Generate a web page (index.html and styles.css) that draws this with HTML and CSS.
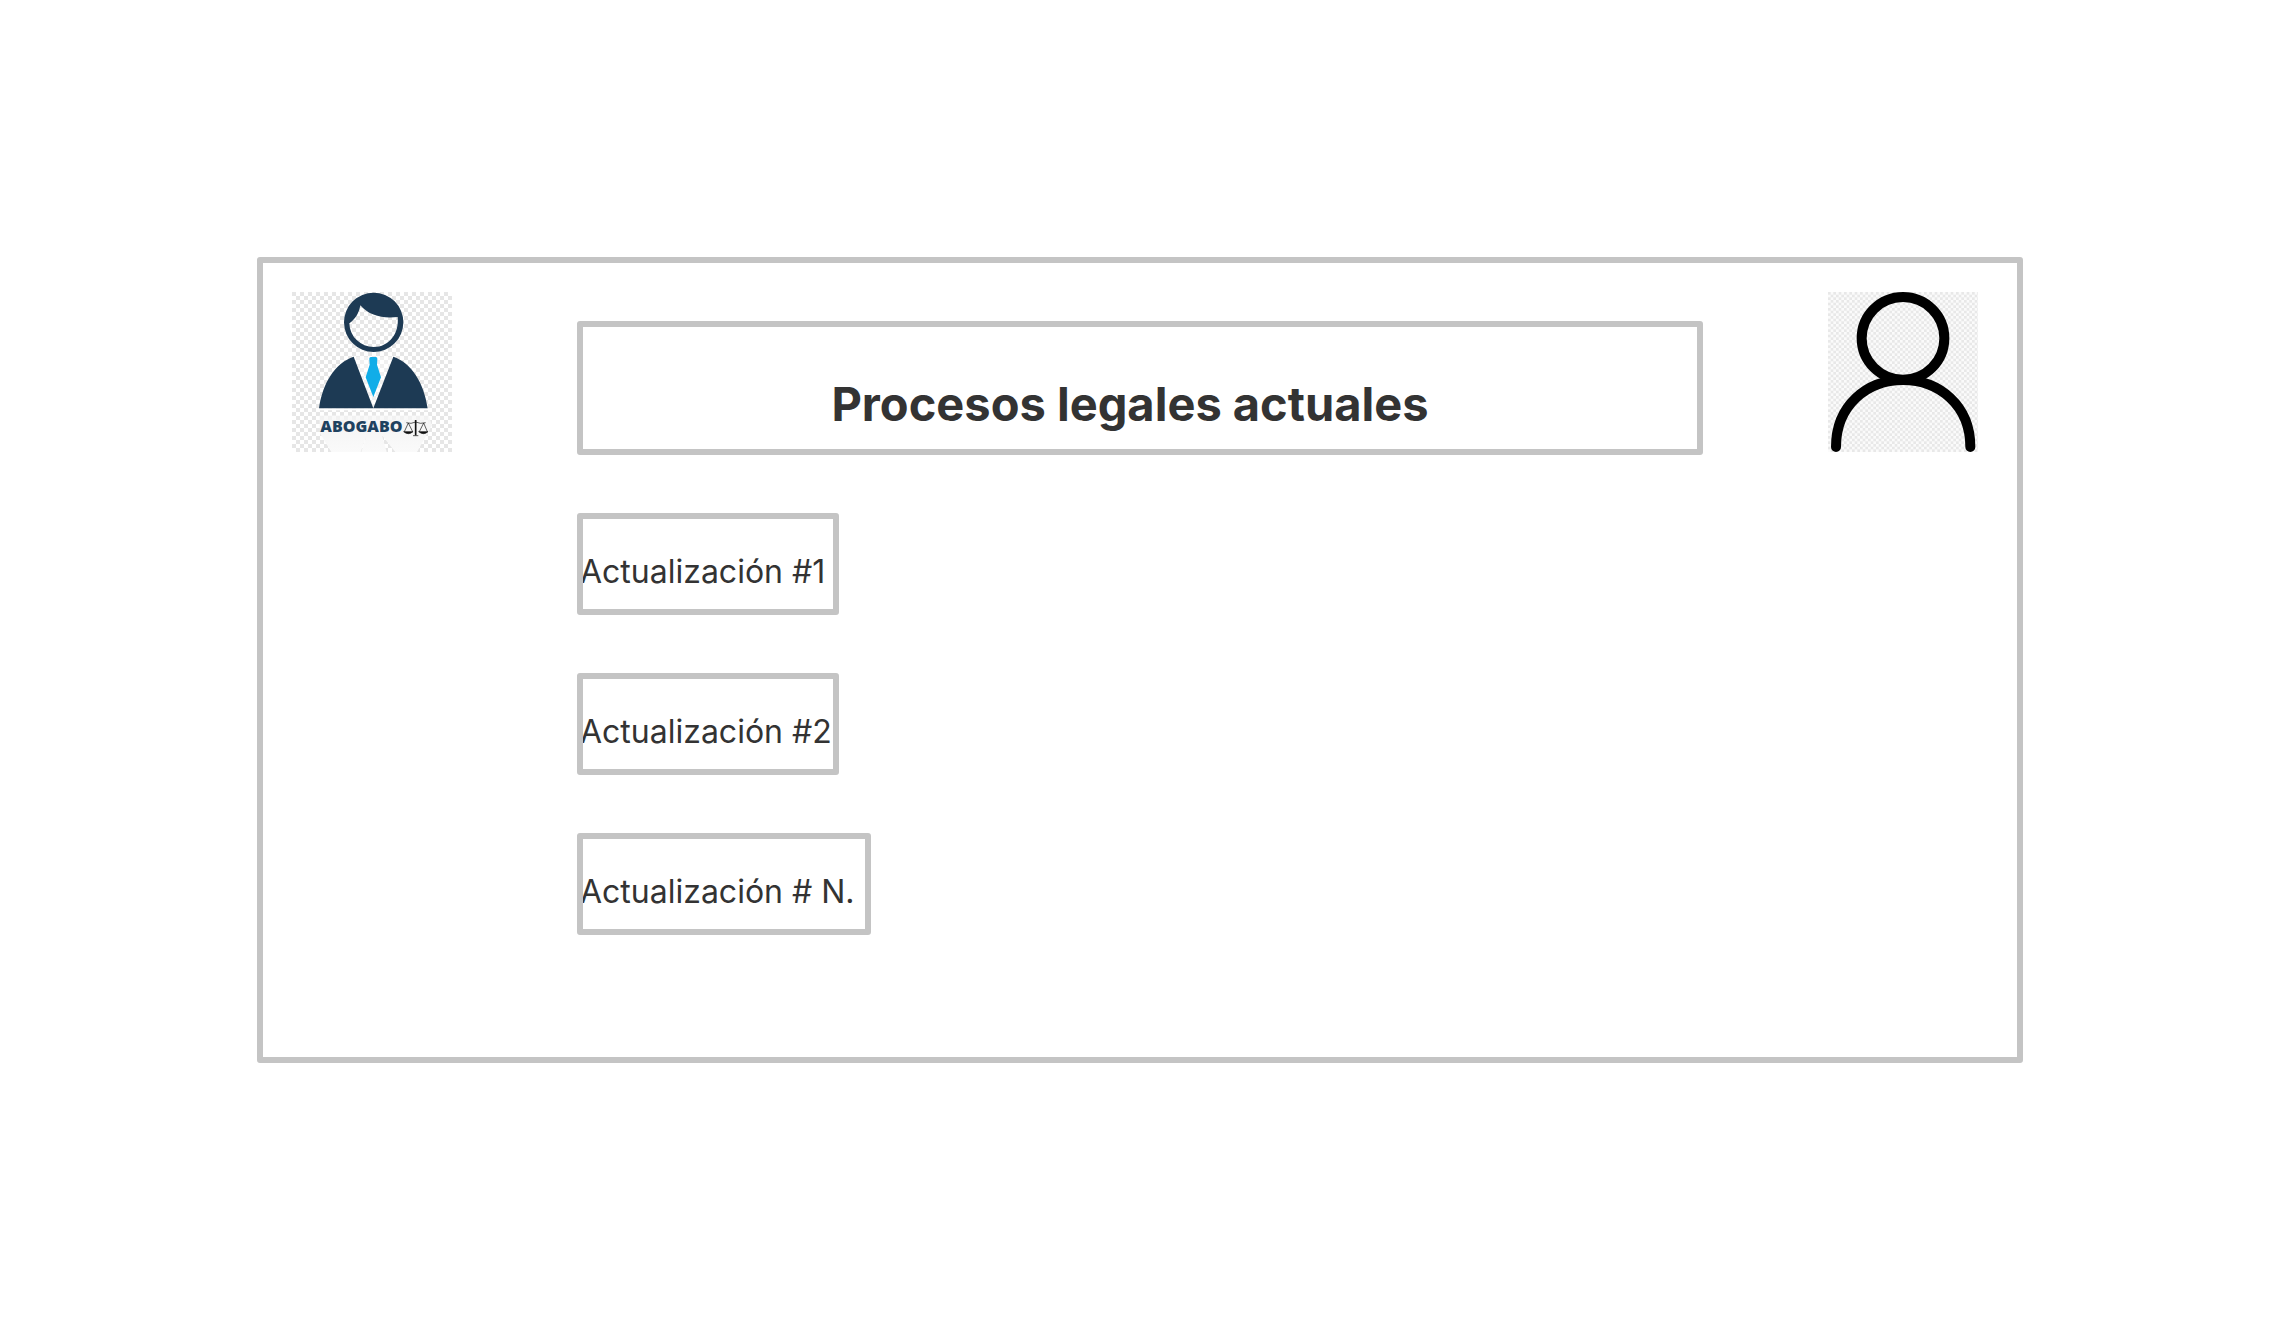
FILE: index.html
```html
<!DOCTYPE html>
<html lang="es">
<head>
<meta charset="utf-8">
<meta name="viewport" content="width=device-width, initial-scale=1">
<title>Procesos legales actuales</title>
<link rel="stylesheet" href="styles.css">
</head>
<body>
<main class="frame">
  <svg class="logo" viewBox="0 0 480 480" role="img" aria-label="Abogabo">
    <defs>
      <pattern id="logo-checks" width="24" height="24" patternUnits="userSpaceOnUse">
        <rect width="24" height="24" fill="#fff"/>
        <path d="M0 0h12v12H0zM12 12h12v12H12z" fill="#e6e6e6"/>
      </pattern>
      <linearGradient id="logo-fade" x1="0" y1="0" x2="0" y2="1">
        <stop offset="0" stop-color="#f7f7f7" stop-opacity=".6"/>
        <stop offset=".3" stop-color="#f5f5f5"/>
        <stop offset="1" stop-color="#fafafa"/>
      </linearGradient>
    </defs>
    <rect width="480" height="480" fill="url(#logo-checks)"/>
    <path d="M82 370H410L420 400L375 480H310L270 430L284 480H208L224 430L206 480H118L84 424Z" fill="url(#logo-fade)"/>
    <path d="M80 352H408" stroke="#fff" stroke-width="6"/>
    <path fill="#1d3a54" fill-rule="evenodd" d="M245 2a89 89 0 1 1 0 178a89 89 0 1 1 0-178zM205 40C201 63 190 82 172 94A73 73 0 0 0 245 165C292 165 322 124 317 75C273 80 232 72 205 40Z"/>
    <path d="M185 194L244 349L304 194Z" fill="#fff" fill-opacity=".4"/>
    <path d="M81 349C92 272 130 212 185 194L244 349ZM407 349C396 272 358 212 304 194L244 349Z" fill="#1d3a54"/>
    <path d="M236 195H252Q257 196 256 202L255 218L267 256L244 315L221 256L233 218L232 202Q231 196 236 195Z" fill="#11ade8"/>
    <text class="logo__name" x="85" y="421">ABOGABO</text>
    <g fill="none" stroke="#111" stroke-width="2">
      <path d="M343 392Q357 397 371 390Q385 397 401 392M349 393L337 419M349 393L362 419M395 393L382 419M395 393L406 419"/>
      <path d="M371 384V430" stroke-width="5"/>
      <path d="M335 419H363Q349 431 335 419ZM380 419H408Q395 431 380 419ZM363 431H379" fill="#111"/>
    </g>
  </svg>

  <h1 class="box title">Procesos legales actuales</h1>

  <svg class="user" viewBox="0 0 450 480" role="img" aria-label="Usuario">
    <defs>
      <pattern id="user-checks" width="16" height="16" patternUnits="userSpaceOnUse">
        <rect width="16" height="16" fill="#fbfbfb"/>
        <path d="M0 0h8v8H0zM8 8h8v8H8z" fill="#e8e8e8"/>
      </pattern>
    </defs>
    <rect width="450" height="480" fill="url(#user-checks)"/>
    <g fill="none" stroke="#000" stroke-width="30" stroke-linecap="round">
      <ellipse cx="225" cy="139" rx="124" ry="124"/>
      <path d="M24 465C24 340 117 264 225 264S427 340 427 465"/>
    </g>
  </svg>

  <ul class="updates">
    <li class="box update">Actualización #1</li>
    <li class="box update">Actualización #2</li>
    <li class="box update update--wide">Actualización # N.</li>
  </ul>
</main>
</body>
</html>
```
FILE: styles.css
```css
* {
  box-sizing: border-box;
}

body {
  margin: 0;
  padding: 257px 255px 255px 257px;
  background: #fff;
  color: #333;
  font-family: Inter, "Liberation Sans", sans-serif;
}

.frame {
  display: grid;
  grid-template-columns: 160px 1fr 150px;
  gap: 58px 125px;
  align-items: start;
  padding: 29px 39px 122px 29px;
  border: 6px solid #c4c4c4;
  border-radius: 3px;
}

.logo,
.user {
  display: block;
  width: 100%;
  height: 160px;
}

.logo__name {
  fill: #1f4260;
  font-family: "Open Sans", sans-serif;
  font-size: 48px;
  font-weight: 800;
}

.box {
  border: 6px solid #c4c4c4;
  border-radius: 3px;
  overflow: hidden;
}

.title {
  margin: 29px 0 0;
  padding: 49px 20px 17px 0;
  font-size: 47px;
  font-weight: 700;
  line-height: 56px;
  text-align: center;
}

.updates {
  grid-column: 2;
  display: flex;
  flex-direction: column;
  align-items: flex-start;
  gap: 58px;
  margin: 0;
  padding: 0;
  list-style: none;
}

.update {
  min-width: 262px;
  padding: 33px 0 17px;
  font-size: 32px;
  line-height: 40px;
  text-indent: -3px;
}

.update--wide {
  min-width: 294px;
}
```
